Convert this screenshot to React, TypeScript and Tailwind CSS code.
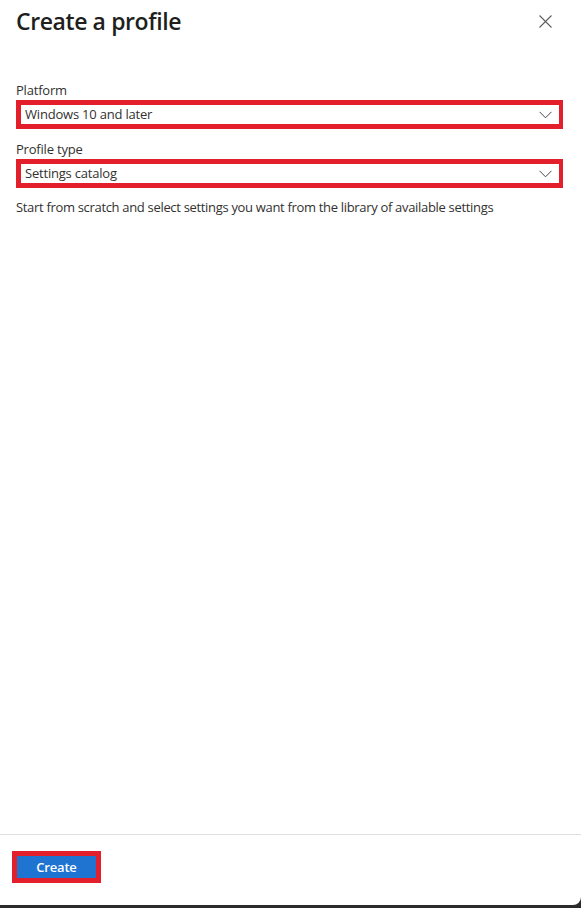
import React from 'react';

const font = { fontFamily: '"Open Sans", "Noto Sans", sans-serif' };

function Chevron() {
  return (
    <svg width="13" height="8" viewBox="0 0 13 8" fill="none" className="text-[#444]">
      <path d="M0.5 0.8 L6.5 6.8 L12.5 0.8" stroke="currentColor" strokeWidth="1" />
    </svg>
  );
}

function Dropdown({ value }: { value: string }) {
  return (
    <div className="h-[29px] border-[5px] border-[#e41f2c] border-r-4 flex items-center justify-between pl-[4px] pr-[7px] bg-white">
      <span className="text-[13px] text-[#323130] leading-none">{value}</span>
      <Chevron />
    </div>
  );
}

export default function App() {
  return (
    <div className="w-[581px] h-[908px] bg-[#2b2b2b] pb-[3px] tracking-[-0.2px]" style={font}>
      <div className="h-full bg-white rounded-br-[8px] flex flex-col">
        <div className="flex items-start justify-between pl-4 pr-[29px] pt-[5px]">
          <h1 className="text-[23px] leading-[32px] text-[#201f1e] font-semibold tracking-[-0.4px]">Create a profile</h1>
          <button type="button" className="mt-[10px] text-[#605e5c]" aria-label="Close">
            <svg width="13" height="13" viewBox="0 0 13 13" fill="none">
              <path d="M0.5 0.5 L12.5 12.5 M12.5 0.5 L0.5 12.5" stroke="currentColor" strokeWidth="1.1" />
            </svg>
          </button>
        </div>

        <div className="flex-1 pl-4 pr-[18px] pt-[45px]">
          <label className="block text-[13px] leading-[17px] text-[#323130] mb-[1px]">Platform</label>
          <Dropdown value="Windows 10 and later" />

          <label className="block text-[13px] leading-[17px] text-[#323130] mt-[12px] mb-[1px]">Profile type</label>
          <Dropdown value="Settings catalog" />

          <p className="text-[13px] leading-[17px] text-[#323130] mt-[11px] tracking-[-0.32px]">
            Start from scratch and select settings you want from the library of available settings
          </p>
        </div>

        <div className="border-t border-[#e1dfdd] h-[71px] pl-3 pt-[16px]">
          <div className="w-[89px] h-[32px] border-[5px] border-[#e41f2c] bg-[#1f73d1] flex items-center justify-center">
            <span className="text-[13px] font-semibold text-white leading-none">Create</span>
          </div>
        </div>
      </div>
    </div>
  );
}
